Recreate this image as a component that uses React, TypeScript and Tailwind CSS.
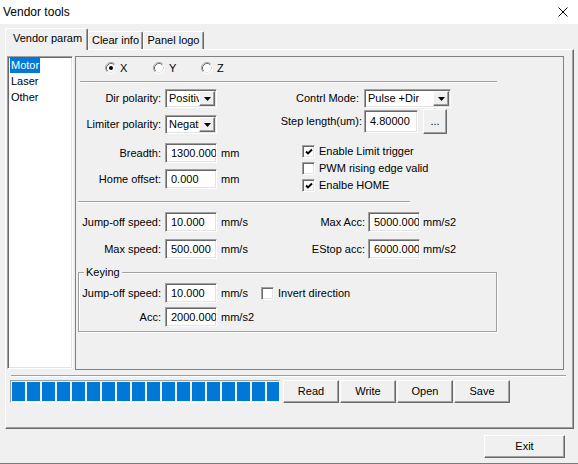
import React from "react";

const SUNKEN =
  "bg-white border border-t-[#a0a0a0] border-l-[#a0a0a0] border-r-white border-b-white shadow-[inset_1px_1px_0_#696969,inset_-1px_-1px_0_#e3e3e3]";
const RAISED =
  "bg-[#f0f0f0] border border-t-white border-l-white border-r-[#696969] border-b-[#696969] shadow-[inset_-1px_-1px_0_#a0a0a0]";

function Field({ cls, v }: { cls: string; v: string }) {
  return (
    <div className={`${SUNKEN} ${cls} shrink-0 flex items-center pl-[5px] overflow-hidden whitespace-nowrap`}>
      {v}
    </div>
  );
}

function Combo({ cls, v }: { cls: string; v: string }) {
  return (
    <div className={`${SUNKEN} ${cls} shrink-0 flex p-[1px]`}>
      <div className="flex-1 min-w-0 flex items-center pl-[2px] overflow-hidden whitespace-nowrap">{v}</div>
      <div className={`${RAISED} w-[16px] shrink-0 flex items-center justify-center`}>
        <svg width="7" height="4" viewBox="0 0 7 4">
          <path d="M0 0H7L3.5 4Z" fill="#000" />
        </svg>
      </div>
    </div>
  );
}

function Check({ on }: { on?: boolean }) {
  return (
    <div className={`${SUNKEN} w-[13px] h-[13px] shrink-0 flex items-center justify-center`}>
      {on && (
        <svg width="8" height="8" viewBox="0 0 8 8">
          <path d="M1 3.5 L3 5.5 L7 1.5" stroke="#000" strokeWidth="1.9" fill="none" />
        </svg>
      )}
    </div>
  );
}

function Radio({ on }: { on?: boolean }) {
  return (
    <svg width="12" height="12" viewBox="0 0 12 12" className="shrink-0">
      <circle cx="6" cy="6" r="5" fill="#fff" />
      <path d="M2.11 9.89A5.5 5.5 0 0 1 9.89 2.11" stroke="#a0a0a0" fill="none" />
      <path d="M9.89 2.11A5.5 5.5 0 0 1 2.11 9.89" stroke="#fff" fill="none" />
      <path d="M2.82 9.18A4.5 4.5 0 0 1 9.18 2.82" stroke="#696969" fill="none" />
      <path d="M9.18 2.82A4.5 4.5 0 0 1 2.82 9.18" stroke="#e3e3e3" fill="none" />
      {on && <circle cx="6" cy="6" r="2" fill="#000" />}
    </svg>
  );
}

function Btn({ cls, children }: { cls: string; children: React.ReactNode }) {
  return <div className={`${RAISED} ${cls} shrink-0 flex items-center justify-center`}>{children}</div>;
}

function Sep({ cls }: { cls: string }) {
  return <div className={`${cls} h-[2px] border-t border-t-[#a0a0a0] border-b border-b-white shrink-0`} />;
}

export default function App() {
  const blocks = Array.from({ length: 18 });
  return (
    <div className="w-[578px] h-[464px] bg-[#f0f0f0] flex flex-col font-['Liberation_Sans',Arial,sans-serif] text-[11px] leading-[13px] text-black border-b border-b-[#7a7a7a] overflow-hidden">
      {/* Title bar */}
      <div className="h-[24px] shrink-0 bg-white flex items-center justify-between pl-[3px] pr-[10px]">
        <span className="text-[12px] leading-[14px]">Vendor tools</span>
        <svg width="10" height="10" viewBox="0 0 10 10">
          <path d="M0.5 0.5L9.5 9.5M9.5 0.5L0.5 9.5" stroke="#000" strokeWidth="1" />
        </svg>
      </div>

      {/* Tabs */}
      <div className="pl-[5px] pr-[4px] mt-[4px] flex flex-col shrink-0">
        <div className="flex items-end h-[21px] relative z-10">
          <div className="h-[22px] mb-[-1px] w-[83px] bg-[#f0f0f0] border-t border-l border-t-white border-l-white border-r border-r-[#696969] rounded-t-[2px] shadow-[inset_-1px_0_0_#a0a0a0] flex items-center pl-[7px] pb-[2px]">
            Vendor param
          </div>
          <div className="h-[18px] w-[55px] border-t border-l border-t-white border-l-white border-r border-r-[#696969] rounded-t-[2px] shadow-[inset_-1px_0_0_#a0a0a0] flex items-center justify-center">
            Clear info
          </div>
          <div className="h-[18px] w-[61px] border-t border-l border-t-white border-l-white border-r border-r-[#696969] rounded-t-[2px] shadow-[inset_-1px_0_0_#a0a0a0] flex items-center justify-center">
            Panel logo
          </div>
        </div>

        {/* Tab page */}
        <div className="h-[380px] border-t border-l border-t-white border-l-white border-r border-b border-r-[#696969] border-b-[#696969] shadow-[inset_-1px_-1px_0_#a0a0a0] pt-[6px] pl-[1px] flex flex-col">
          <div className="flex gap-[2px] h-[314px] shrink-0">
            {/* List box */}
            <div className={`${SUNKEN} w-[66px] h-[313px] shrink-0 flex flex-col pl-[2px] items-start`}>
              <div className="h-[16px] flex items-center px-[1px] bg-[#0078d7] text-white">Motor</div>
              <div className="h-[16px] flex items-center px-[1px]">Laser</div>
              <div className="h-[16px] flex items-center px-[1px]">Other</div>
            </div>

            {/* Panel */}
            <div className="w-[489px] h-[314px] border border-[#808080] shrink-0 flex flex-col">
              {/* radios */}
              <div className="mt-[5px] h-[12px] pl-[29px] flex items-center">
                <div className="w-[48px] flex items-center gap-[3px]">
                  <Radio on />
                  <span>X</span>
                </div>
                <div className="w-[48px] flex items-center gap-[4px]">
                  <Radio />
                  <span>Y</span>
                </div>
                <div className="w-[48px] flex items-center gap-[4px]">
                  <Radio />
                  <span>Z</span>
                </div>
              </div>
              <Sep cls="mt-[7px] ml-[4px] w-[417px]" />

              {/* two columns */}
              <div className="h-[118px] flex shrink-0">
                <div className="w-[184px] flex flex-col shrink-0">
                  <div className="mt-[6px] h-[19px] flex items-center">
                    <div className="w-[85px] text-right shrink-0">Dir polarity:</div>
                    <Combo cls="ml-[4px] w-[52px] h-[19px]" v="Positive" />
                  </div>
                  <div className="mt-[7px] h-[19px] flex items-center">
                    <div className="w-[85px] text-right shrink-0">Limiter polarity:</div>
                    <Combo cls="ml-[4px] w-[52px] h-[19px]" v="Negative" />
                  </div>
                  <div className="mt-[9px] h-[20px] flex items-center">
                    <div className="w-[85px] text-right shrink-0">Breadth:</div>
                    <Field cls="ml-[4px] w-[52px] h-[20px]" v="1300.000" />
                    <span className="ml-[4px]">mm</span>
                  </div>
                  <div className="mt-[6px] h-[20px] flex items-center">
                    <div className="w-[85px] text-right shrink-0">Home offset:</div>
                    <Field cls="ml-[4px] w-[52px] h-[20px]" v="0.000" />
                    <span className="ml-[4px]">mm</span>
                  </div>
                </div>
                <div className="flex flex-col">
                  <div className="mt-[6px] h-[19px] flex items-center">
                    <div className="w-[99px] text-right shrink-0">Contrl Mode:</div>
                    <Combo cls="ml-[5px] w-[87px] h-[19px]" v="Pulse +Dir" />
                  </div>
                  <div className="mt-[1px] h-[25px] flex items-center">
                    <div className="w-[102px] text-right shrink-0">Step length(um):</div>
                    <Field cls="ml-[2px] w-[54px] h-[23px]" v="4.80000" />
                    <Btn cls="ml-[5px] w-[24px] h-[25px]">...</Btn>
                  </div>
                  <div className="mt-[9px] h-[17px] pl-[42px] flex items-center gap-[4px]">
                    <Check on />
                    <span>Enable Limit trigger</span>
                  </div>
                  <div className="h-[17px] pl-[42px] flex items-center gap-[4px]">
                    <Check />
                    <span>PWM rising edge valid</span>
                  </div>
                  <div className="h-[17px] pl-[42px] flex items-center gap-[4px]">
                    <Check on />
                    <span>Enalbe HOME</span>
                  </div>
                </div>
              </div>
              <Sep cls="ml-[2px] w-[332px]" />

              {/* speed rows */}
              <div className="mt-[9px] h-[20px] flex items-center">
                <div className="w-[184px] flex items-center shrink-0">
                  <div className="w-[85px] text-right shrink-0">Jump-off speed:</div>
                  <Field cls="ml-[4px] w-[52px] h-[20px]" v="10.000" />
                  <span className="ml-[4px]">mm/s</span>
                </div>
                <div className="w-[105px] text-right shrink-0">Max Acc:</div>
                <Field cls="ml-[3px] w-[52px] h-[20px]" v="5000.000" />
                <span className="ml-[3px]">mm/s2</span>
              </div>
              <div className="mt-[7px] h-[20px] flex items-center">
                <div className="w-[184px] flex items-center shrink-0">
                  <div className="w-[85px] text-right shrink-0">Max speed:</div>
                  <Field cls="ml-[4px] w-[52px] h-[20px]" v="500.000" />
                  <span className="ml-[4px]">mm/s</span>
                </div>
                <div className="w-[105px] text-right shrink-0">EStop acc:</div>
                <Field cls="ml-[3px] w-[52px] h-[20px]" v="6000.000" />
                <span className="ml-[3px]">mm/s2</span>
              </div>

              {/* Keying group */}
              <div className="mt-[13px] ml-[2px] w-[419px] h-[60px] relative border border-[#a0a0a0] shadow-[inset_1px_1px_0_#fff,1px_1px_0_#fff] flex flex-col shrink-0">
                <span className="absolute -top-[7px] left-[5px] bg-[#f0f0f0] px-[2px]">Keying</span>
                <div className="mt-[10px] h-[20px] flex items-center">
                  <div className="w-[82px] text-right shrink-0">Jump-off speed:</div>
                  <Field cls="ml-[4px] w-[52px] h-[20px]" v="10.000" />
                  <span className="ml-[4px] w-[40px] shrink-0">mm/s</span>
                  <Check />
                  <span className="ml-[4px]">Invert direction</span>
                </div>
                <div className="mt-[4px] h-[20px] flex items-center">
                  <div className="w-[82px] text-right shrink-0">Acc:</div>
                  <Field cls="ml-[4px] w-[52px] h-[20px]" v="2000.000" />
                  <span className="ml-[4px]">mm/s2</span>
                </div>
              </div>
            </div>
          </div>

          <Sep cls="mt-[5px] ml-[4px] w-[555px]" />
          <div className="mt-[3px] h-[23px] flex items-center shrink-0">
            <div className="ml-[3px] w-[270px] h-[23px] border border-t-[#a0a0a0] border-l-[#a0a0a0] border-r-white border-b-white p-[1px] overflow-hidden flex gap-[2px] shrink-0">
              {blocks.map((_, i) => (
                <div key={i} className="w-[13px] h-full bg-[#0078d7] shrink-0" />
              ))}
            </div>
            <div className="ml-[3px] flex gap-[1px]">
              <Btn cls="w-[56px] h-[23px]">Read</Btn>
              <Btn cls="w-[56px] h-[23px]">Write</Btn>
              <Btn cls="w-[56px] h-[23px]">Open</Btn>
              <Btn cls="w-[56px] h-[23px]">Save</Btn>
            </div>
          </div>
        </div>
      </div>

      <div className="mt-[6px] flex justify-end pr-[13px] shrink-0">
        <Btn cls="w-[81px] h-[23px]">Exit</Btn>
      </div>
    </div>
  );
}
